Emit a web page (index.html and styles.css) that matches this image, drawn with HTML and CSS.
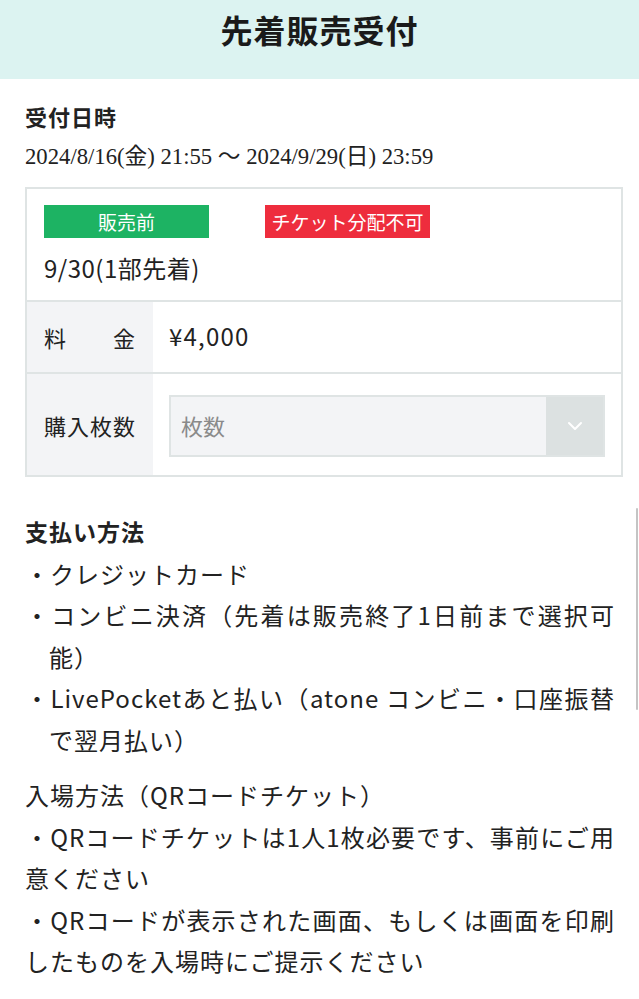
FILE: index.html
```html
<!DOCTYPE html>
<html lang="ja">
<head>
    <meta charset="UTF-8">
    <meta name="viewport" content="width=device-width, initial-scale=1.0">
    <title>先着販売受付</title>
    <link rel="stylesheet" href="styles.css">
</head>
<body>

	<div class="page_head">
		<h1>先着販売受付</h1>
	</div>

	<div class="wrapper">
		<h3 class="sub_title">受付日時</h3>
		<p class="period">2024/8/16(金) 21:55 〜 2024/9/29(日) 23:59</p>

		<div class="ticket_box">
			<div class="ticket_head">
				<div class="badges">
					<span class="badge badge_green">販売前</span>
					<span class="badge badge_red">チケット分配不可</span>
				</div>
				<div class="ticket_name">9/30(1部先着)</div>
			</div>
			<div class="ticket_row">
				<div class="ticket_label"><span>料　金</span></div>
				<div class="ticket_value price">¥4,000</div>
			</div>
			<div class="ticket_row">
				<div class="ticket_label"><span>購入枚数</span></div>
				<div class="ticket_value select_cell">
					<div class="select">
						<span class="select_text">枚数</span>
						<span class="select_arrow">
							<svg width="16" height="10" viewBox="0 0 16 10"><path d="M2 2 L8 8 L14 2" fill="none" stroke="#fff" stroke-width="2" stroke-linecap="round" stroke-linejoin="round"/></svg>
						</span>
					</div>
				</div>
			</div>
		</div>

		<div class="info">
			<h3 class="info_title">支払い方法</h3>
			<ul class="info_list">
				<li>・クレジットカード</li>
				<li>・コンビニ決済（先着は販売終了1日前まで選択可能）</li>
				<li>・LivePocketあと払い（atone コンビニ・口座振替で翌月払い）</li>
			</ul>

			<p class="info_text">入場方法（QRコードチケット）<br>・QRコードチケットは1人1枚必要です、事前にご用意ください<br>・QRコードが表示された画面、もしくは画面を印刷したものを入場時にご提示ください</p>
		</div>
	</div>

	<div class="scroll_bar"></div>

</body>
</html>
```

FILE: styles.css
```css
body{
	font-family: "Noto Sans CJK JP", "Noto Sans", sans-serif;
	color: #222;
	margin: 0;
	padding: 0;
	background: #fff;
	position: relative;
}
.page_head{
	background: #dcf3f1;
	padding: 9px 0 30px;
	text-align: center;
}
.page_head h1{
	margin: 0;
	font-size: 32px;
	line-height: 40px;
	letter-spacing: 1px;
	font-weight: 700;
	color: #1a1a1a;
}
.wrapper{
	padding: 21px 16px 0 25px;
}
.sub_title{
	margin: 0;
	font-size: 22px;
	line-height: 32px;
	letter-spacing: 1px;
	font-weight: 700;
}
.period{
	margin: 9px 0 0;
	font-family: "Liberation Serif", "Noto Sans CJK JP", serif;
	font-size: 22.7px;
	line-height: 32px;
}

.ticket_box{
	margin-top: 14px;
	border: 2px solid #dfe4e4;
}
.ticket_head{
	padding: 16px 17px 16px;
	border-bottom: 2px solid #dfe4e4;
}
.badges{
	display: flex;
	gap: 56px;
}
.badge{
	width: 165px;
	height: 33px;
	line-height: 33px;
	text-align: center;
	color: #fff;
	font-size: 19px;
	white-space: nowrap;
}
.badge_green{ background: #1db363;}
.badge_red{ background: #ee2d3d;}
.ticket_name{
	margin-top: 14px;
	font-size: 24px;
	letter-spacing: 0.5px;
	line-height: 32px;
}
.ticket_row{
	display: flex;
	border-bottom: 2px solid #dfe4e4;
}
.ticket_row:last-child{ border-bottom: none;}
.ticket_label{
	box-sizing: border-box;
	width: 126px;
	flex-shrink: 0;
	background: #f3f4f6;
	padding: 0 17px;
	font-size: 22px;
	letter-spacing: 1px;
	display: flex;
	align-items: center;
}
.ticket_label span{
	width: 100%;
	text-align: justify;
	text-align-last: justify;
}
.ticket_value{
	flex: 1;
	padding: 19px 16px 21px;
	font-size: 24px;
	letter-spacing: 1.2px;
	line-height: 30px;
}
.select_cell{
	padding: 21px 16px 18px;
	letter-spacing: 0;
}
.select{
	display: flex;
	height: 62px;
	box-sizing: border-box;
	border: 2px solid #dfe4e4;
	background: #f3f4f6;
}
.select_text{
	flex: 1;
	padding-left: 10px;
	color: #8a8a8a;
	font-size: 22px;
	line-height: 56px;
}
.select_arrow{
	width: 57px;
	background: #dce1e1;
	display: flex;
	align-items: center;
	justify-content: center;
}

.info{
	margin-top: 34px;
	padding-right: 8px;
	font-size: 24px;
	line-height: 41.5px;
	letter-spacing: 1px;
	text-align: justify;
}
.info_title{
	margin: 0;
	font-size: 23px;
	letter-spacing: 1px;
	font-weight: 700;
}
.info_list{
	list-style: none;
	margin: 0;
	padding: 0;
}
.info_list li{
	padding-left: 1em;
	text-indent: -1em;
}
.info_text{
	margin: 14px 0 0;
}

.scroll_bar{
	position: absolute;
	top: 508px;
	right: 1px;
	width: 2px;
	height: 202px;
	background: #c4c4c4;
	border-radius: 1px;
}
```
